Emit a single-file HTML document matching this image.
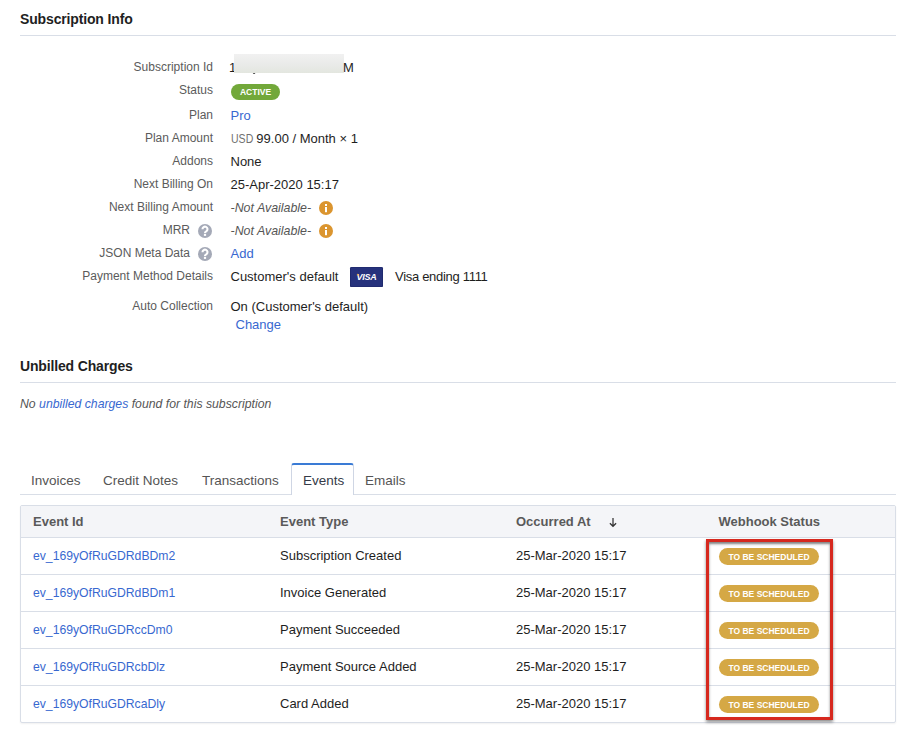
<!DOCTYPE html>
<html><head><meta charset="utf-8">
<style>
html,body{margin:0;padding:0;background:#fff;width:906px;height:732px;overflow:hidden;position:relative;font-family:"Liberation Sans",sans-serif;}
.t{position:absolute;line-height:16px;white-space:nowrap;}
.h{font-weight:bold;font-size:14px;letter-spacing:-0.15px;color:#1f1f1f;left:20px;}
.hr{position:absolute;left:20px;width:876px;height:1px;background:#d9dee7;}
.lb{font-size:12px;color:#5b5b5b;right:693px;text-align:right;}
.v{font-size:13px;color:#1e1e1e;left:230.5px;}
.badge{position:absolute;border-radius:9px;color:#fff;font-weight:bold;text-align:center;}
.ic{position:absolute;width:14px;height:14px;line-height:0;}
.tab{font-size:13.5px;color:#555;}
.th{font-size:13px;font-weight:bold;color:#5a5a5a;}
.td{font-size:13px;color:#1e1e1e;}
.lnk{color:#3868d0 !important;}
.rl{position:absolute;left:21px;width:874px;height:1px;background:#d9dee7;}
.na{font-style:italic;color:#565656 !important;font-size:12.4px !important;}
</style></head><body>
<div class="t h" style="top:11px">Subscription Info</div>
<div class="hr" style="top:35px"></div>
<div class="t lb" style="top:59px">Subscription Id</div>
<div class="t lb" style="top:82px">Status</div>
<div class="t lb" style="top:107px">Plan</div>
<div class="t lb" style="top:130px">Plan Amount</div>
<div class="t lb" style="top:153px">Addons</div>
<div class="t lb" style="top:176px">Next Billing On</div>
<div class="t lb" style="top:199px">Next Billing Amount</div>
<div class="t lb" style="top:222px;right:716px">MRR</div>
<div class="t lb" style="top:245px;right:716px">JSON Meta Data</div>
<div class="t lb" style="top:268px">Payment Method Details</div>
<div class="t lb" style="top:298px">Auto Collection</div>
<div class="ic" style="left:198px;top:224px"><svg width="14" height="14" viewBox="0 0 14 14"><circle cx="7" cy="7" r="7" fill="#a4a9b7"/><path d="M4.5 5.2 A2.5 2.5 0 1 1 8.5 7.1 C7.4 7.7 7 8 7 9" fill="none" stroke="#fff" stroke-width="2.1"/><rect x="5.9" y="9.8" width="2.2" height="2.1" fill="#fff"/></svg></div>
<div class="ic" style="left:198px;top:247px"><svg width="14" height="14" viewBox="0 0 14 14"><circle cx="7" cy="7" r="7" fill="#a4a9b7"/><path d="M4.5 5.2 A2.5 2.5 0 1 1 8.5 7.1 C7.4 7.7 7 8 7 9" fill="none" stroke="#fff" stroke-width="2.1"/><rect x="5.9" y="9.8" width="2.2" height="2.1" fill="#fff"/></svg></div>
<div class="t v" style="top:60px;left:229px">1</div>
<div style="position:absolute;left:234px;top:54px;width:110px;height:19px;background:linear-gradient(180deg,#f1f1f1,#e9eae8 60%,#e3e6df)"></div>
<div class="t v" style="top:60px;left:343px">M</div>
<div style="position:absolute;left:252.5px;top:73px;width:2px;height:1.3px;background:#555;transform:skewX(-30deg)"></div>
<div class="badge" style="left:231px;top:84px;width:49px;height:16px;background:#72a83a;font-size:8.5px;line-height:16px">ACTIVE</div>
<div class="t v lnk" style="top:108px">Pro</div>
<div class="t v" style="top:131px"><span style="display:inline-block;color:#707070;font-size:13.5px;transform:scaleX(0.78);transform-origin:0 0;margin-right:-6.3px">USD</span> 99.00 / Month × 1</div>
<div class="t v" style="top:154px">None</div>
<div class="t v" style="top:177px">25-Apr-2020 15:17</div>
<div class="t v na" style="top:200px">-Not Available-</div>
<div class="ic" style="left:319px;top:201px"><svg width="14" height="14" viewBox="0 0 14 14"><circle cx="7" cy="7" r="7" fill="#db952f"/><rect x="6" y="3" width="2" height="2" fill="#fff"/><rect x="6" y="6" width="2" height="5.2" fill="#fff"/></svg></div>
<div class="t v na" style="top:223px">-Not Available-</div>
<div class="ic" style="left:319px;top:224px"><svg width="14" height="14" viewBox="0 0 14 14"><circle cx="7" cy="7" r="7" fill="#db952f"/><rect x="6" y="3" width="2" height="2" fill="#fff"/><rect x="6" y="6" width="2" height="5.2" fill="#fff"/></svg></div>
<div class="t v lnk" style="top:246px">Add</div>
<div class="t v" style="top:269px">Customer's default</div>
<div style="position:absolute;left:350px;top:267px;width:33px;height:20px;background:#26327c;border-radius:1.5px;box-shadow:inset 0 0 0 0.6px #1c2566;color:#fff;font-weight:bold;font-style:italic;font-size:9px;line-height:20px;text-align:center;letter-spacing:-0.3px">VISA</div>
<div style="position:absolute;left:357px;top:273.5px;width:0;height:0;border-left:2.2px solid #f0a020;border-bottom:1.4px solid transparent;border-top:1.4px solid transparent;transform:rotate(35deg)"></div>
<div class="t v" style="top:269px;left:395px;letter-spacing:-0.3px">Visa ending 1111</div>
<div class="t v" style="top:299px">On (Customer's default)</div>
<div class="t v lnk" style="top:317px;left:235.5px">Change</div>
<div class="t h" style="top:358px">Unbilled Charges</div>
<div class="hr" style="top:382px"></div>
<div class="t" style="top:396px;left:20px;font-size:12.25px;font-style:italic;color:#555">No <span class="lnk">unbilled charges</span> found for this subscription</div>
<div class="hr" style="top:494px"></div>
<div class="t tab" style="top:473px;left:31px">Invoices</div>
<div class="t tab" style="top:473px;left:103px">Credit Notes</div>
<div class="t tab" style="top:473px;left:202px">Transactions</div>
<div style="position:absolute;left:291px;top:463px;width:61px;height:30px;border:1px solid #cfd6e4;border-bottom:none;border-top:2px solid #3a7bd5;border-radius:3px 3px 0 0;background:#fff"></div>
<div class="t tab" style="top:473px;left:303px;color:#353b48">Events</div>
<div class="t tab" style="top:473px;left:365px">Emails</div>
<div style="position:absolute;left:20px;top:505px;width:874px;height:216px;border:1px solid #d9dee7;border-radius:2px;background:#fff;box-shadow:0 1px 2px rgba(0,0,0,.06)"></div>
<div style="position:absolute;left:21px;top:506px;width:874px;height:31px;background:#f4f5f8"></div>
<div class="rl" style="top:537px"></div>
<div class="rl" style="top:574px"></div>
<div class="rl" style="top:611px"></div>
<div class="rl" style="top:648px"></div>
<div class="rl" style="top:685px"></div>
<div class="t th" style="top:514px;left:33px">Event Id</div>
<div class="t th" style="top:514px;left:280px">Event Type</div>
<div class="t th" style="top:514px;left:516px">Occurred At</div>
<div class="ic" style="left:608.5px;top:517.5px;width:8px;height:10px"><svg width="8" height="10" viewBox="0 0 8 10"><path d="M4 0 V8.3 M0.9 5.2 L4 8.3 L7.1 5.2" fill="none" stroke="#333" stroke-width="1.25"/></svg></div>
<div class="t th" style="top:514px;left:718.5px">Webhook Status</div>
<div class="t td lnk" style="top:548px;left:33px;font-size:12.2px">ev_169yOfRuGDRdBDm2</div>
<div class="t td" style="top:548px;left:280px">Subscription Created</div>
<div class="t td" style="top:548px;left:516px">25-Mar-2020 15:17</div>
<div class="badge" style="left:719px;top:548px;width:100px;height:17px;background:#d5a845;font-size:8.5px;line-height:18.5px">TO BE SCHEDULED</div>
<div class="t td lnk" style="top:585px;left:33px;font-size:12.2px">ev_169yOfRuGDRdBDm1</div>
<div class="t td" style="top:585px;left:280px">Invoice Generated</div>
<div class="t td" style="top:585px;left:516px">25-Mar-2020 15:17</div>
<div class="badge" style="left:719px;top:585px;width:100px;height:17px;background:#d5a845;font-size:8.5px;line-height:18.5px">TO BE SCHEDULED</div>
<div class="t td lnk" style="top:622px;left:33px;font-size:12.2px">ev_169yOfRuGDRccDm0</div>
<div class="t td" style="top:622px;left:280px">Payment Succeeded</div>
<div class="t td" style="top:622px;left:516px">25-Mar-2020 15:17</div>
<div class="badge" style="left:719px;top:622px;width:100px;height:17px;background:#d5a845;font-size:8.5px;line-height:18.5px">TO BE SCHEDULED</div>
<div class="t td lnk" style="top:659px;left:33px;font-size:12.2px">ev_169yOfRuGDRcbDlz</div>
<div class="t td" style="top:659px;left:280px">Payment Source Added</div>
<div class="t td" style="top:659px;left:516px">25-Mar-2020 15:17</div>
<div class="badge" style="left:719px;top:659px;width:100px;height:17px;background:#d5a845;font-size:8.5px;line-height:18.5px">TO BE SCHEDULED</div>
<div class="t td lnk" style="top:696px;left:33px;font-size:12.2px">ev_169yOfRuGDRcaDly</div>
<div class="t td" style="top:696px;left:280px">Card Added</div>
<div class="t td" style="top:696px;left:516px">25-Mar-2020 15:17</div>
<div class="badge" style="left:719px;top:696px;width:100px;height:17px;background:#d5a845;font-size:8.5px;line-height:18.5px">TO BE SCHEDULED</div>
<div style="position:absolute;left:706px;top:539px;width:121px;height:175px;border:3px solid #d6281e;box-shadow:0 2px 3px rgba(0,0,0,.45), inset 0 2px 2.5px rgba(0,0,0,.5)"></div>
</body></html>
